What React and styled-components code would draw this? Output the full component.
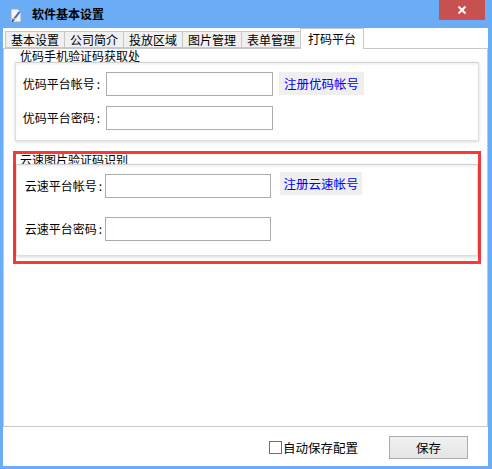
import React, { useState } from "react";
import styled, { createGlobalStyle } from "styled-components";

const Global = createGlobalStyle`
  html, body {
    margin: 0;
    padding: 0;
    background: #6aacf5;
  }
  * {
    box-sizing: border-box;
  }
`;

const FONT = `"Noto Sans CJK SC", "Liberation Sans", sans-serif`;

const tabs = ["基本设置", "公司简介", "投放区域", "图片管理", "表单管理", "打码平台"];

const Window = styled.div`
  width: 492px;
  height: 469px;
  display: flex;
  flex-direction: column;
  padding: 0 4px 3px 3px;
  background: #6aacf5;
  font-family: ${FONT};
  font-size: 12px;
  color: #000;
`;

const TitleBar = styled.div`
  height: 28px;
  display: flex;
  align-items: flex-start;
`;

const AppIcon = styled.svg`
  width: 16px;
  height: 16px;
  margin: 7px 0 0 5px;
`;

const Title = styled.div`
  margin: 6px 0 0 8px;
  font-weight: bold;
  line-height: 16px;
  flex: 1;
`;

const CloseButton = styled.div`
  width: 46px;
  height: 20px;
  margin-right: 3px;
  background: #c75050;
  display: flex;
  align-items: center;
  justify-content: center;
`;

const Body = styled.div`
  flex: 1;
  background: #fff;
  display: flex;
  flex-direction: column;
`;

const TabStrip = styled.div`
  height: 20px;
  display: flex;
  align-items: flex-end;
  padding-left: 2px;
  position: relative;
  z-index: 1;
`;

const Tab = styled.div`
  height: ${(p) => (p.$active ? "21px" : "17px")};
  margin-bottom: ${(p) => (p.$active ? "-1px" : "0")};
  margin-left: ${(p) => (p.$active ? "-1px" : "0")};
  padding: 0 ${(p) => (p.$active ? "7px" : "5px")};
  border: 1px solid #c8c8c8;
  border-bottom: ${(p) => (p.$active ? "none" : "1px solid #c8c8c8")};
  border-left: ${(p) => (p.$active || p.$first ? "1px solid #c8c8c8" : "none")};
  background: ${(p) => (p.$active ? "#fff" : "#f0f0f0")};
  line-height: ${(p) => (p.$active ? "20px" : "15px")};
  white-space: nowrap;
  cursor: default;
`;

const Panel = styled.div`
  height: 379px;
  border: 1px solid #c8c8c8;
  padding: 1px 8px 0 11px;
  display: flex;
  flex-direction: column;
`;

const GroupTitle = styled.div`
  height: 14px;
  line-height: 12px;
  padding-left: ${(p) => p.$indent}px;
  white-space: nowrap;
`;

const GroupBox = styled.div`
  position: relative;
  margin-top: ${(p) => p.$pull}px;
  background: #fff;
  border: 1px solid #dedede;
  border-top-color: #d2d2d2;
  box-shadow: 0 1px 3px rgba(0, 0, 0, 0.16), inset 0 2px 2px rgba(0, 0, 0, 0.05);
  display: flex;
  flex-direction: column;
  gap: ${(p) => p.$rowGap}px;
  padding: 9px 0 ${(p) => p.$bottom}px;
`;

const Row = styled.div`
  display: grid;
  grid-template-columns: ${(p) => p.$label}px ${(p) => p.$input}px auto;
  column-gap: ${(p) => p.$gap}px;
  align-items: start;
`;

const Label = styled.div`
  text-align: right;
  line-height: 24px;
  white-space: nowrap;
`;

const Colon = styled.span`
  margin-left: 2px;
`;

const Input = styled.input`
  height: 24px;
  border: 1px solid #ababab;
  background: #fff;
  font-family: ${FONT};
  font-size: 12px;
  padding: 0 3px;
  outline: none;
`;

const LinkButton = styled.div`
  margin-left: ${(p) => p.$shift || 0}px;
  margin-top: ${(p) => p.$raise || 0}px;
  width: ${(p) => p.$width}px;
  height: 23px;
  line-height: 23px;
  background: #efefef;
  color: #0000ff;
  font-size: 12.5px;
  text-align: center;
  cursor: pointer;
`;

const Highlight = styled.div`
  margin: 10px -2px 0;
  border: 3px solid #f43a3a;
  padding: 0 0 5px;
`;

const Footer = styled.div`
  flex: 1;
  display: flex;
  align-items: center;
  justify-content: flex-end;
  padding: 1px 20px 0 0;
`;

const CheckLabel = styled.label`
  display: flex;
  align-items: center;
  gap: 1px;
  margin-right: 31px;
  font-size: 12.5px;
  cursor: default;
`;

const CheckBox = styled.span`
  width: 13px;
  height: 13px;
  border: 1px solid #707070;
  background: #fff;
`;

const SaveButton = styled.button`
  width: 79px;
  height: 23px;
  border: 1px solid #adadad;
  background: linear-gradient(#f0f0f0, #e5e5e5);
  font-family: ${FONT};
  font-size: 12.5px;
  color: #000;
  padding: 0;
`;

const Field = ({ label, layout, link }) => (
  <Row $label={layout.label} $input={layout.input} $gap={layout.gap}>
    <Label>
      {label}
      <Colon>:</Colon>
    </Label>
    <Input type="text" />
    {link}
  </Row>
);

const App = () => {
  const [active, setActive] = useState(5);
  const [autoSave, setAutoSave] = useState(false);

  const first = { label: 84, input: 167, gap: 6 };
  const second = { label: 85, input: 166, gap: 3 };

  return (
    <>
      <Global />
      <Window>
        <TitleBar>
          <AppIcon viewBox="0 0 16 16">
            <path d="M3 2h7l3 3v10H3z" fill="#f4f6fa" stroke="#9aa6b8" strokeWidth="1" />
            <path d="M4 13l7-9 1.6 1.2-7 9L4 14.5z" fill="#3f6fc4" />
            <path d="M4 13l1.6 1.2L3.6 15z" fill="#27354f" />
            <path d="M3.5 11.5h5" stroke="#b7c2d3" strokeWidth="1" />
          </AppIcon>
          <Title>软件基本设置</Title>
          <CloseButton>
            <svg width="10" height="10" viewBox="0 0 10 10">
              <path d="M1.5 1.5l7 7M8.5 1.5l-7 7" stroke="#fff" strokeWidth="2" />
            </svg>
          </CloseButton>
        </TitleBar>
        <Body>
          <TabStrip>
            {tabs.map((t, i) => (
              <Tab key={t} $active={i === active} $first={i === 0} onClick={() => setActive(i)}>
                {t}
              </Tab>
            ))}
          </TabStrip>
          <Panel>
            <GroupTitle $indent={5}>优码手机验证码获取处</GroupTitle>
            <GroupBox $pull={-2} $rowGap={10} $bottom={10}>
              <Field
                label="优码平台帐号"
                layout={first}
                link={<LinkButton $width={85}>注册优码帐号</LinkButton>}
              />
              <Field label="优码平台密码" layout={first} />
            </GroupBox>
            <Highlight>
              <GroupTitle $indent={4}>云速图片验证码识别</GroupTitle>
              <GroupBox $pull={-4} $rowGap={19} $bottom={14}>
                <Field
                  label="云速平台帐号"
                  layout={second}
                  link={
                    <LinkButton $width={82} $shift={6} $raise={-2}>
                      注册云速帐号
                    </LinkButton>
                  }
                />
                <Field label="云速平台密码" layout={second} />
              </GroupBox>
            </Highlight>
          </Panel>
          <Footer>
            <CheckLabel onClick={() => setAutoSave(!autoSave)}>
              <CheckBox>
                {autoSave && (
                  <svg width="11" height="11" viewBox="0 0 11 11">
                    <path d="M2 5.5l2.5 2.5L9 3" stroke="#222" strokeWidth="1.5" fill="none" />
                  </svg>
                )}
              </CheckBox>
              自动保存配置
            </CheckLabel>
            <SaveButton>保存</SaveButton>
          </Footer>
        </Body>
      </Window>
    </>
  );
};

export default App;
